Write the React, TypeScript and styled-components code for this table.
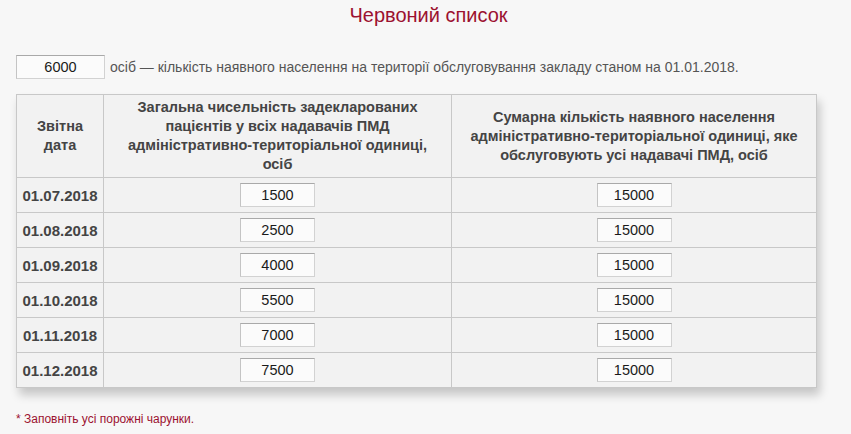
import React from 'react';
import styled, { createGlobalStyle } from 'styled-components';

const GlobalStyle = createGlobalStyle`
  html, body {
    margin: 0;
    padding: 0;
    background: #f7f7f7;
    font-family: Arial, 'Liberation Sans', sans-serif;
  }
`;

type RowType = {
  date: string,
  declared: string,
  total: string,
};

const rows: RowType[] = [
  { date: '01.07.2018', declared: '1500', total: '15000' },
  { date: '01.08.2018', declared: '2500', total: '15000' },
  { date: '01.09.2018', declared: '4000', total: '15000' },
  { date: '01.10.2018', declared: '5500', total: '15000' },
  { date: '01.11.2018', declared: '7000', total: '15000' },
  { date: '01.12.2018', declared: '7500', total: '15000' },
];

export default function App() {
  return (
    <Page>
      <GlobalStyle />
      <Title>Червоний список</Title>

      <PopulationRow>
        <NumberInput width='89px' defaultValue='6000' />
        <PopulationLabel>
          осіб — кількість наявного населення на території обслуговування закладу станом на 01.01.2018.
        </PopulationLabel>
      </PopulationRow>

      <Table>
        <colgroup>
          <col style={{ width: 87 }} />
          <col style={{ width: 348 }} />
          <col style={{ width: 365 }} />
        </colgroup>
        <thead>
          <tr>
            <HeadCell>Звітна<br />дата</HeadCell>
            <HeadCell>
              Загальна чисельність задекларованих пацієнтів у всіх надавачів ПМД
              адміністративно-територіальної одиниці, осіб
            </HeadCell>
            <HeadCell>
              Сумарна кількість наявного населення адміністративно-територіальної
              одиниці, яке обслуговують усі надавачі ПМД, осіб
            </HeadCell>
          </tr>
        </thead>
        <tbody>
          {rows.map((r) => (
            <tr key={r.date}>
              <DateCell>{r.date}</DateCell>
              <Cell><NumberInput width='75px' defaultValue={r.declared} /></Cell>
              <Cell><NumberInput width='75px' defaultValue={r.total} /></Cell>
            </tr>
          ))}
        </tbody>
      </Table>

      <Note>* Заповніть усі порожні чарунки.</Note>
    </Page>
  );
}

const Page = styled.div`
  padding: 0 16px;
  width: 851px;
  box-sizing: border-box;
`;

const Title = styled.div`
  text-align: center;
  font-size: 20px;
  line-height: 28px;
  padding-top: 1px;
  color: #9c1230;
  padding-left: 6px;
`;

const PopulationRow = styled.div`
  display: flex;
  align-items: center;
  margin-top: 26px;
`;

const NumberInput = styled.input<{ width: string }>`
  box-sizing: border-box;
  width: ${(p) => p.width};
  height: 24px;
  background: #fbfbfb;
  border: 1px solid #d2d2d2;
  border-top-color: #a9a9a9;
  border-left-color: #c4c4c4;
  text-align: center;
  font-family: Arial, 'Liberation Sans', sans-serif;
  font-size: 14.5px;
  color: #1a1a1a;
  padding: 0;
  outline: none;
`;

const PopulationLabel = styled.div`
  margin-left: 5px;
  font-size: 14px;
  color: #555555;
`;

const Table = styled.table`
  margin-top: 15px;
  width: 800px;
  border-collapse: collapse;
  table-layout: fixed;
  background: #f2f2f2;
  border: 1px solid #c8c8c8;
  box-shadow: 3px 7px 9px rgba(0, 0, 0, 0.2);
`;

const HeadCell = styled.th`
  border: 1px solid #c8c8c8;
  height: 82px;
  padding: 0 8px;
  font-size: 14.5px;
  line-height: 19px;
  font-weight: bold;
  color: #444444;
  text-align: center;
  vertical-align: middle;
`;

const Cell = styled.td`
  border: 1px solid #c8c8c8;
  height: 34px;
  padding: 0;
  text-align: center;
  vertical-align: middle;
`;

const DateCell = styled(Cell)`
  font-size: 15px;
  font-weight: bold;
  color: #444444;
`;

const Note = styled.div`
  margin-top: 24px;
  font-size: 12px;
  color: #9c1230;
`;
